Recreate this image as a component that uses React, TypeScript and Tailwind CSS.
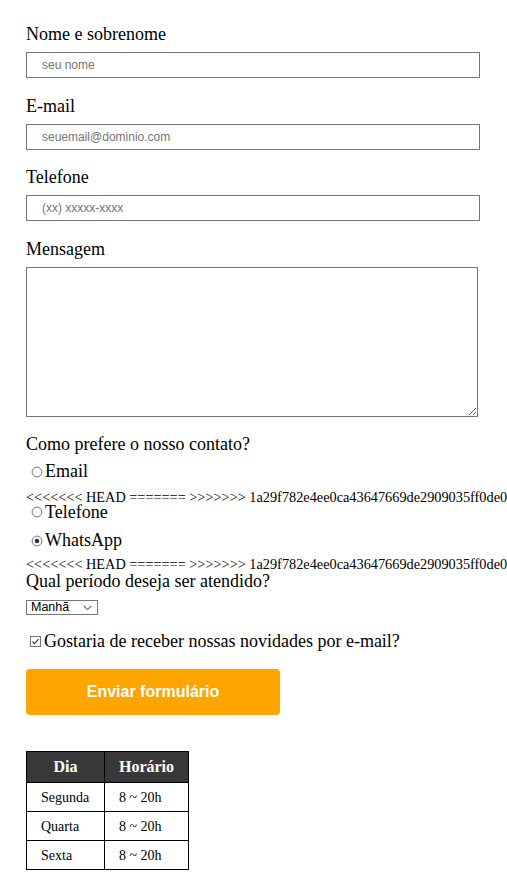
import React from "react";

const serif = { fontFamily: '"Liberation Serif", "Times New Roman", serif' };

function Radio({ checked }: { checked?: boolean }) {
  return (
    <svg width="12" height="12" viewBox="0 0 12 12" className="shrink-0">
      <circle cx="6" cy="6" r="4.9" fill="white" stroke="#767676" strokeWidth="1" />
      {checked && <circle cx="6" cy="6" r="2.3" fill="#333333" />}
    </svg>
  );
}

function Check() {
  return (
    <svg width="11" height="11" viewBox="0 0 11 11" className="shrink-0">
      <rect x="0.5" y="0.5" width="10" height="10" fill="white" stroke="#767676" strokeWidth="1" />
      <path d="M2.4 5.6 L4.4 7.6 L8.6 3.2" fill="none" stroke="#333333" strokeWidth="1.1" />
    </svg>
  );
}

const conflict =
  "<<<<<<< HEAD ======= >>>>>>> 1a29f782e4ee0ca43647669de2909035ff0de0c5";

export default function App() {
  return (
    <div className="w-[507px] overflow-hidden bg-white text-black" style={serif}>
      <div className="pl-[26px] pt-[24px] pb-[25px]">
        <div className="h-[21px] text-[18px] leading-[21px]">Nome e sobrenome</div>
        <input
          className="mt-[7px] block h-[26px] w-[454px] border border-[#767676] pl-[15px] text-[12px] outline-none placeholder:text-[#757575]"
          style={{ fontFamily: '"Liberation Sans", Arial, sans-serif' }}
          placeholder="seu nome"
        />
        <div className="mt-[18px] h-[21px] text-[18px] leading-[21px]">E-mail</div>
        <input
          className="mt-[7px] block h-[26px] w-[454px] border border-[#767676] pl-[15px] text-[12px] outline-none placeholder:text-[#757575]"
          style={{ fontFamily: '"Liberation Sans", Arial, sans-serif' }}
          placeholder="seuemail@dominio.com"
        />
        <div className="mt-[17px] h-[21px] text-[18px] leading-[21px]">Telefone</div>
        <input
          className="mt-[7px] block h-[26px] w-[454px] border border-[#767676] pl-[15px] text-[12px] outline-none placeholder:text-[#757575]"
          style={{ fontFamily: '"Liberation Sans", Arial, sans-serif' }}
          placeholder="(xx) xxxxx-xxxx"
        />
        <div className="mt-[18px] h-[21px] text-[18px] leading-[21px]">Mensagem</div>
        <textarea className="mt-[7px] block h-[150px] w-[452px] border border-[#767676] outline-none" />

        <div className="mt-[17px] h-[21px] text-[18px] leading-[21px]">Como prefere o nosso contato?</div>
        <div className="mt-[6px] flex h-[21px] items-center text-[18px] leading-[21px]">
          <span className="ml-[5px] mr-[2px] flex"><Radio /></span>
          <span>Email</span>
        </div>
        <div className="mt-[8px] h-[14px] whitespace-nowrap text-[14.3px] leading-[14px]">{conflict}</div>
        <div className="flex h-[16px] items-center text-[18px] leading-[16px]">
          <span className="ml-[5px] mr-[2px] flex"><Radio /></span>
          <span>Telefone</span>
        </div>
        <div className="mt-[10px] flex h-[21px] items-center text-[18px] leading-[21px]">
          <span className="ml-[5px] mr-[2px] flex"><Radio checked /></span>
          <span>WhatsApp</span>
        </div>
        <div className="mt-[6px] h-[14px] whitespace-nowrap text-[14.3px] leading-[14px]">{conflict}</div>
        <div className="h-[20px] text-[18px] leading-[20px]">Qual período deseja ser atendido?</div>

        <div
          className="mt-[9px] flex h-[15px] w-[72px] items-center justify-between border border-[#767676] pl-[4px] pr-[5px] text-[12.5px] leading-[13px]"
          style={{ fontFamily: '"Liberation Sans", Arial, sans-serif' }}
        >
          <span>Manhã</span>
          <svg width="9" height="6" viewBox="0 0 9 6">
            <path d="M0.8 1 L4.5 4.6 L8.2 1" fill="none" stroke="#6d6d6d" strokeWidth="1.1" />
          </svg>
        </div>

        <div className="mt-[16px] flex h-[21px] items-center text-[18px] leading-[21px]">
          <span className="ml-[4px] mr-[3px] flex"><Check /></span>
          <span>Gostaria de receber nossas novidades por e-mail?</span>
        </div>

        <button
          className="mt-[17px] flex h-[46px] w-[254px] items-center justify-center rounded-[4px] bg-[#ffa500] text-[16px] font-bold text-white"
          style={{ fontFamily: '"Liberation Sans", Arial, sans-serif' }}
        >
          Enviar formulário
        </button>

        <table className="mt-[36px] border-collapse text-[14px]">
          <thead>
            <tr className="h-[31px] bg-[#383838] text-[16px] font-bold text-white">
              <th className="w-[78px] border border-black p-0 text-center">Dia</th>
              <th className="w-[84px] border border-black p-0 text-center">Horário</th>
            </tr>
          </thead>
          <tbody>
            {["Segunda", "Quarta", "Sexta"].map((d) => (
              <tr key={d} className="h-[29px]">
                <td className="border border-black pl-[14px]">{d}</td>
                <td className="border border-black pl-[14px]">8 ~ 20h</td>
              </tr>
            ))}
          </tbody>
        </table>
      </div>
    </div>
  );
}
